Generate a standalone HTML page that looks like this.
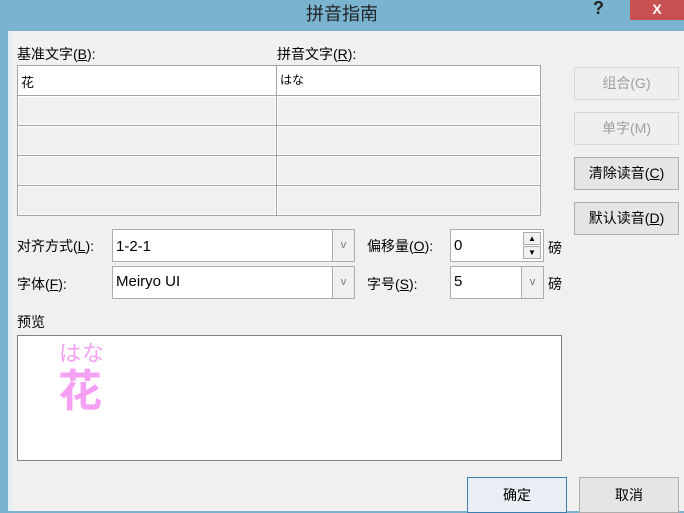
<!DOCTYPE html>
<html><head><meta charset="utf-8"><style>
*{margin:0;padding:0;box-sizing:border-box}
body{width:684px;height:511px;overflow:hidden;background:#7ab3cf;font-family:"Liberation Sans","Noto Sans CJK SC",sans-serif;font-size:14px;color:#000;position:relative}
.a{position:absolute}
#main{left:8px;top:31px;width:676px;height:480px;background:#f0f0f0}
.cell{position:absolute;border:1px solid #a5a5a5;background:#f0f0f0;box-shadow:inset 0 0 0 1px #fff}
.cell.w{background:#fff;box-shadow:none}
.btn{position:absolute;border:1px solid #adadad;background:#e5e5e5;text-align:center;font-size:14px}
.dis{color:#a0a0a0;background:#efefef;border-color:#d6d6d6}
.lbl{position:absolute;font-size:14px;white-space:nowrap}
.combo{position:absolute;background:#fff;border:1px solid #acacac}
.dd{position:absolute;right:0;top:0;bottom:0;width:22px;border-left:1px solid #acacac;background:#f0f0f0;color:#777;font-size:11px;text-align:center}
u{text-decoration:underline}
</style></head><body>
<div class="a" style="left:0;top:0;width:684px;height:30px;text-align:center;font-size:18px;line-height:28px;color:#222">拼音指南</div>
<div class="a" style="left:593px;top:-2px;font-size:18px;font-weight:bold;color:#222">?</div>
<div class="a" style="left:630px;top:0;width:54px;height:20px;background:#c75050;color:#fff;font-weight:bold;text-align:center;line-height:19px;font-size:14px">X</div>
<div class="a" id="main"></div>
<div class="a" style="left:8px;top:31px;width:4px;height:480px;background:#e3edf3"></div>
<div class="lbl" style="left:17px;top:44px">基准文字(<u>B</u>):</div>
<div class="lbl" style="left:277px;top:44px">拼音文字(<u>R</u>):</div>
<div class="cell w" style="left:17px;top:65px;width:260px;height:31px;padding:6px 3px;font-size:13px">花</div>
<div class="cell w" style="left:276px;top:65px;width:265px;height:31px;padding:5px 3px;font-size:12px">はな</div>
<div class="cell" style="left:17px;top:95px;width:260px;height:31px"></div>
<div class="cell" style="left:276px;top:95px;width:265px;height:31px"></div>
<div class="cell" style="left:17px;top:125px;width:260px;height:31px"></div>
<div class="cell" style="left:276px;top:125px;width:265px;height:31px"></div>
<div class="cell" style="left:17px;top:155px;width:260px;height:31px"></div>
<div class="cell" style="left:276px;top:155px;width:265px;height:31px"></div>
<div class="cell" style="left:17px;top:185px;width:260px;height:31px"></div>
<div class="cell" style="left:276px;top:185px;width:265px;height:31px"></div>
<div class="btn dis" style="left:574px;top:67px;width:105px;height:33px;line-height:31px">组合(G)</div>
<div class="btn dis" style="left:574px;top:112px;width:105px;height:33px;line-height:31px">单字(M)</div>
<div class="btn" style="left:574px;top:157px;width:105px;height:33px;line-height:31px">清除读音(<u>C</u>)</div>
<div class="btn" style="left:574px;top:202px;width:105px;height:33px;line-height:31px">默认读音(<u>D</u>)</div>
<div class="lbl" style="left:17px;top:236px">对齐方式(<u>L</u>):</div>
<div class="combo" style="left:112px;top:229px;width:243px;height:33px"><div class="a" style="left:3px;top:8px;font-size:15px">1-2-1</div><div class="dd" style="line-height:31px">v</div></div>
<div class="lbl" style="left:367px;top:236px">偏移量(<u>O</u>):</div>
<div class="combo" style="left:450px;top:229px;width:94px;height:33px"><div class="a" style="left:3px;top:7px;font-size:15px">0</div>
<div class="a" style="right:2px;top:2px;width:18px;height:13px;border:1px solid #acacac;background:#f0f0f0;font-size:8px;text-align:center;line-height:11px">▲</div>
<div class="a" style="right:2px;top:16px;width:18px;height:13px;border:1px solid #acacac;background:#f0f0f0;font-size:8px;text-align:center;line-height:11px">▼</div></div>
<div class="lbl" style="left:548px;top:238px">磅</div>
<div class="lbl" style="left:17px;top:274px">字体(<u>F</u>):</div>
<div class="combo" style="left:112px;top:266px;width:243px;height:33px"><div class="a" style="left:3px;top:6px;font-size:15px">Meiryo UI</div><div class="dd" style="line-height:31px">v</div></div>
<div class="lbl" style="left:367px;top:274px">字号(<u>S</u>):</div>
<div class="combo" style="left:450px;top:266px;width:94px;height:33px"><div class="a" style="left:3px;top:6px;font-size:15px">5</div><div class="dd" style="line-height:31px">v</div></div>
<div class="lbl" style="left:548px;top:274px">磅</div>
<div class="lbl" style="left:17px;top:312px">预览</div>
<div class="a" style="left:17px;top:335px;width:545px;height:126px;background:#fff;border:1px solid #828282"></div>
<div class="a" style="left:59px;top:340px;font-size:22px;line-height:28px;color:#f5a0f5;letter-spacing:1px">はな</div>
<div class="a" style="left:58px;top:368px;font-size:44px;font-weight:bold;color:#f5a0f5;line-height:48px">花</div>
<div class="btn" style="left:467px;top:477px;width:100px;height:36px;line-height:34px;border-color:#3c7fb1;background:#e8eef3">确定</div>
<div class="btn" style="left:579px;top:477px;width:100px;height:36px;line-height:34px">取消</div>
</body></html>
